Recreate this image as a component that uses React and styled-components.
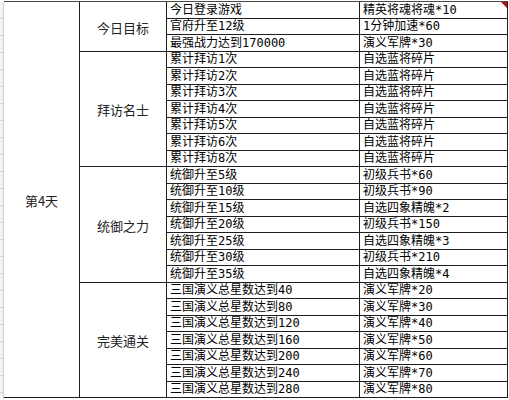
import React from 'react';
import styled, { createGlobalStyle } from 'styled-components';

const groups = [
  {
    name: '今日目标',
    rows: [
      ['今日登录游戏', '精英将魂将魂*10'],
      ['官府升至12级', '1分钟加速*60'],
      ['最强战力达到170000', '演义军牌*30'],
    ],
  },
  {
    name: '拜访名士',
    rows: [1, 2, 3, 4, 5, 6, 8].map((n) => [`累计拜访${n}次`, '自选蓝将碎片']),
  },
  {
    name: '统御之力',
    rows: [
      ['统御升至5级', '初级兵书*60'],
      ['统御升至10级', '初级兵书*90'],
      ['统御升至15级', '自选四象精魄*2'],
      ['统御升至20级', '初级兵书*150'],
      ['统御升至25级', '自选四象精魄*3'],
      ['统御升至30级', '初级兵书*210'],
      ['统御升至35级', '自选四象精魄*4'],
    ],
  },
  {
    name: '完美通关',
    rows: [40, 80, 120, 160, 200, 240, 280].map((n, i) => [
      `三国演义总星数达到${n}`,
      `演义军牌*${(i + 2) * 10}`,
    ]),
  },
];

export default function App() {
  return (
    <>
      <GlobalStyle />
      <Sheet>
        <Strip />
        <Table>
          <DayCell>第4天</DayCell>
          <Groups>
            {groups.map((g) => (
              <Group key={g.name}>
                <GroupName>{g.name}</GroupName>
                <Rows>
                  {g.rows.map(([task, reward], i) => (
                    <Row key={task}>
                      <Task>{task}</Task>
                      <Reward>
                        {reward}
                        {g.name === '今日目标' && i === 0 && <CommentMark />}
                      </Reward>
                    </Row>
                  ))}
                </Rows>
              </Group>
            ))}
          </Groups>
        </Table>
      </Sheet>
    </>
  );
}

const GlobalStyle = createGlobalStyle`
  body {
    margin: 0;
    background: #fff;
    font-family: "DejaVu Sans Mono", "Noto Sans CJK SC", sans-serif;
    font-size: 12px;
    color: #000;
  }
`;

const LINE = '#1e1e1e';

const Sheet = styled.div`
  display: flex;
  width: 509px;
  height: 400px;
  padding-top: 1px;
  box-sizing: border-box;
`;

const Strip = styled.div`
  width: 3px;
  flex-shrink: 0;
  background: repeating-linear-gradient(
    to bottom,
    #f4f4f4 0,
    #f4f4f4 16px,
    #d6d6d6 16px,
    #d6d6d6 17px
  );
  border-right: 1px solid #cfcfcf;
  margin-top: 1px;
  height: 397px;
`;

const Table = styled.div`
  display: flex;
  align-self: flex-start;
  border-top: 1px solid #4a4a4a;
  border-right: 1px solid ${LINE};
`;

const MergedCell = styled.div`
  display: flex;
  align-items: center;
  justify-content: center;
  box-sizing: border-box;
  border-right: 1px solid ${LINE};
  border-bottom: 1px solid ${LINE};
  font-family: "Noto Sans CJK SC", sans-serif;
  font-size: 13px;
  color: #222;
`;

const DayCell = styled(MergedCell)`
  width: 76px;
  padding-top: 2px;
`;

const Groups = styled.div`
  display: flex;
  flex-direction: column;
`;

const Group = styled.div`
  display: flex;
`;

const GroupName = styled(MergedCell)`
  width: 87px;
  padding-top: 2px;
`;

const Rows = styled.div`
  display: flex;
  flex-direction: column;
`;

const Row = styled.div`
  display: flex;
  height: 16.5px;
  box-sizing: border-box;
  border-bottom: 1px solid ${LINE};
`;

const Cell = styled.div`
  position: relative;
  display: flex;
  align-items: center;
  padding-left: 3px;
  box-sizing: border-box;
  line-height: 1;
  white-space: nowrap;
`;

const Task = styled(Cell)`
  width: 193px;
  border-right: 1px solid ${LINE};
`;

const Reward = styled(Cell)`
  width: 147px;
`;

const CommentMark = styled.span`
  position: absolute;
  top: 0;
  right: 0;
  width: 0;
  height: 0;
  border-top: 6px solid #b3121c;
  border-left: 6px solid transparent;
`;
